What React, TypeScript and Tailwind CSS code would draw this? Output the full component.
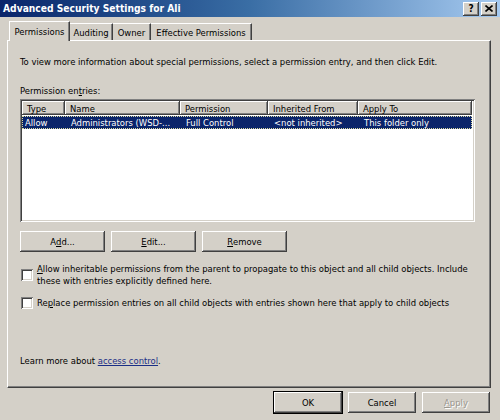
import React from "react";

const raised =
  "shadow-[inset_-1px_-1px_0_#404040,inset_1px_1px_0_#ffffff,inset_-2px_-2px_0_#808080,inset_2px_2px_0_#d4d0c8]";

function Btn({
  children,
  wide = true,
  disabled = false,
  isDefault = false,
}: {
  children: React.ReactNode;
  wide?: boolean;
  disabled?: boolean;
  isDefault?: boolean;
}) {
  return (
    <div
      className={`flex h-[21px] items-center justify-center bg-[#d4d0c8] ${raised} ${wide ? "w-[85px]" : "w-[68px]"} ${
        disabled ? "text-[#9a978f] [text-shadow:1px_1px_0_#ffffff]" : "text-black"
      } ${isDefault ? "outline outline-1 outline-black" : ""}`}
    >
      {children}
    </div>
  );
}

function Check() {
  return (
    <div className="h-[12px] w-[12px] shrink-0 bg-white shadow-[inset_1px_1px_0_#808080,inset_-1px_-1px_0_#ffffff,inset_2px_2px_0_#404040,inset_-2px_-2px_0_#d4d0c8]" />
  );
}

const cols = [
  { label: "Type", w: "w-[43px]", v: "Allow" },
  { label: "Name", w: "w-[115px]", v: "Administrators (WSD-..." },
  { label: "Permission", w: "w-[88px]", v: "Full Control" },
  { label: "Inherited From", w: "w-[90px]", v: "<not inherited>" },
  { label: "Apply To", w: "w-[114px]", v: "This folder only" },
];

const tab =
  "flex h-[17px] items-center border-t border-r border-t-white border-r-[#404040] px-[5px] shadow-[inset_-1px_0_0_#808080]";

export default function App() {
  return (
    <div
      className="flex h-[420px] w-[500px] flex-col overflow-hidden bg-[#d4d0c8] text-[9.4px] leading-[13px] text-black"
      style={{ fontFamily: "'DejaVu Sans Condensed', 'Liberation Sans', sans-serif" }}
    >
      {/* title bar */}
      <div className="flex h-[17px] shrink-0 items-center justify-between bg-gradient-to-r from-[#0a246a] via-[#3a6ea5] to-[#a6caf0] pl-[3px] pr-[3px]">
        <span className="text-[10.2px] font-bold text-white">Advanced Security Settings for Ali</span>
        <div className="flex gap-[2px]">
          <div className={`flex h-[14px] w-[16px] items-center justify-center bg-[#d4d0c8] text-[10px] font-bold ${raised}`}>?</div>
          <div className={`flex h-[14px] w-[16px] items-center justify-center bg-[#d4d0c8] ${raised}`}>
            <svg width="8" height="7" viewBox="0 0 8 7">
              <path d="M0.5 0.5L7.5 6.5M7.5 0.5L0.5 6.5" stroke="#000" strokeWidth="1.6" />
            </svg>
          </div>
        </div>
      </div>

      {/* tabs */}
      <div className="mt-[4px] flex h-[19px] items-end pl-[9px]">
        <div className="relative z-10 -mb-[1px] flex h-[20px] w-[61px] items-center justify-center border-l border-t border-r border-l-white border-t-white border-r-[#404040] bg-[#d4d0c8] shadow-[inset_-1px_0_0_#808080]">
          Permissions
        </div>
        <div className={`${tab} w-[43px] justify-center`}>Auditing</div>
        <div className={`${tab} w-[38px] justify-center`}>Owner</div>
        <div className={`${tab} w-[101px] justify-center`}>Effective Permissions</div>
      </div>

      {/* panel */}
      <div className="ml-[7px] flex h-[348px] w-[484px] flex-col border-l border-t border-r border-b border-l-white border-t-white border-r-[#404040] border-b-[#404040] pl-[12px] pr-[10px] pt-[14px] shadow-[inset_-1px_-1px_0_#808080]">
        <p className="whitespace-nowrap">To view more information about special permissions, select a permission entry, and then click Edit.</p>
        <p className="mt-[16px]">
          Permission en<span className="underline">t</span>ries:
        </p>

        {/* list */}
        <div className="mt-[2px] h-[123px] w-[455px] bg-white p-[2px] shadow-[inset_1px_1px_0_#808080,inset_-1px_-1px_0_#ffffff,inset_2px_2px_0_#404040,inset_-2px_-2px_0_#d4d0c8]">
          <div className="flex h-[14px]">
            {cols.map((c) => (
              <div key={c.label} className={`${c.w} flex items-center whitespace-nowrap bg-[#d4d0c8] pl-[5px] ${raised}`}>
                {c.label}
              </div>
            ))}
          </div>
          <div className="mt-[1px] flex h-[13px] w-[450px] items-center bg-[#0a246a] text-white outline outline-1 -outline-offset-1 outline-dotted outline-[#d8d8a0]">
            {cols.map((c) => (
              <div key={c.label} className={`${c.w} whitespace-nowrap ${c.label === "Type" ? "pl-[3px]" : "pl-[6px]"}`}>
                {c.v}
              </div>
            ))}
          </div>
        </div>

        {/* buttons */}
        <div className="mt-[9px] flex gap-[6px]">
          <Btn>
            A<span className="underline">d</span>d...
          </Btn>
          <Btn>
            <span className="underline">E</span>dit...
          </Btn>
          <Btn>
            <span className="underline">R</span>emove
          </Btn>
        </div>

        <div className="mt-[11px] flex items-center gap-[4px] pl-[1px] leading-[12px]">
          <Check />
          <p className="whitespace-nowrap">
            <span className="underline">A</span>llow inheritable permissions from the parent to propagate to this object and all child objects. Include
            <br />
            these with entries explicitly defined here.
          </p>
        </div>
        <div className="mt-[10px] flex items-center gap-[4px] pl-[1px] leading-[12px]">
          <Check />
          <p className="whitespace-nowrap">
            Re<span className="underline">p</span>lace permission entries on all child objects with entries shown here that apply to child objects
          </p>
        </div>

        <p className="mt-[45px]">
          Learn more about <span className="text-[#1a2e86] underline">access control</span>.
        </p>
      </div>

      {/* footer buttons */}
      <div className="mt-[4px] flex justify-end gap-[6px] pr-[10px]">
        <Btn wide={false} isDefault>
          OK
        </Btn>
        <Btn wide={false}>Cancel</Btn>
        <Btn wide={false} disabled>
          <span className="underline">A</span>pply
        </Btn>
      </div>
    </div>
  );
}
